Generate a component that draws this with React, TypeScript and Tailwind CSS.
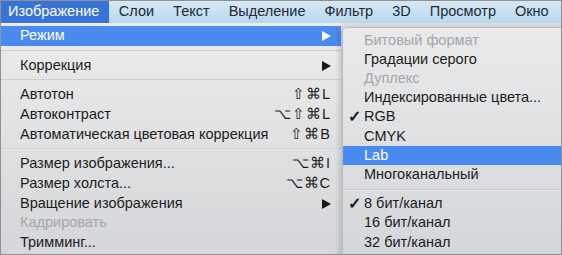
import { ReactNode } from 'react'

// ── data ──────────────────────────────────────────────────────────────────────

const bar = ['Изображение', 'Слои', 'Текст', 'Выделение', 'Фильтр', '3D', 'Просмотр', 'Окно']

type Item =
  | { sep: true }
  | { label: string; shortcut?: string; arrow?: boolean; disabled?: boolean; active?: boolean; check?: boolean }

const main: Item[] = [
  { label: 'Режим', arrow: true, active: true },
  { sep: true },
  { label: 'Коррекция', arrow: true },
  { sep: true },
  { label: 'Автотон', shortcut: '⇧⌘L' },
  { label: 'Автоконтраст', shortcut: '⌥⇧⌘L' },
  { label: 'Автоматическая цветовая коррекция', shortcut: '⇧⌘B' },
  { sep: true },
  { label: 'Размер изображения...', shortcut: '⌥⌘I' },
  { label: 'Размер холста...', shortcut: '⌥⌘C' },
  { label: 'Вращение изображения', arrow: true },
  { label: 'Кадрировать', disabled: true },
  { label: 'Тримминг...' },
]

const sub: Item[] = [
  { label: 'Битовый формат', disabled: true },
  { label: 'Градации серого' },
  { label: 'Дуплекс', disabled: true },
  { label: 'Индексированные цвета...' },
  { label: 'RGB', check: true },
  { label: 'CMYK' },
  { label: 'Lab', active: true },
  { label: 'Многоканальный' },
  { sep: true },
  { label: '8 бит/канал', check: true },
  { label: '16 бит/канал' },
  { label: '32 бит/канал' },
]

// ── pieces ────────────────────────────────────────────────────────────────────

function Arrow({ white }: { white?: boolean }) {
  return (
    <svg width="9" height="10" viewBox="0 0 9 10">
      <path d="M0 0L9 5L0 10Z" fill={white ? '#ffffff' : '#1a1a1a'} />
    </svg>
  )
}

function Separator() {
  return <div className="my-[4px] h-[2px] border-b border-[#e4e5e6] bg-[#cfd0d2]" />
}

function Row({ item, indent, height }: { item: Item; indent: string; height: string }): ReactNode {
  if ('sep' in item) return <Separator />
  const color = item.active ? 'text-white' : item.disabled ? 'text-[#a4a6a9]' : 'text-[#1c1c1c]'
  return (
    <div
      className={`relative flex items-center pr-[10px] ${height} ${indent} ${color} ${
        item.active ? 'bg-[#4a8bf2]' : ''
      }`}
    >
      {item.check && <span className="absolute left-[5px] text-[16px] font-bold leading-none">✓</span>}
      <span className="flex-1 whitespace-nowrap">{item.label}</span>
      {item.shortcut && <span className="tracking-[1px]">{item.shortcut}</span>}
      {item.arrow && <Arrow white={item.active} />}
    </div>
  )
}

// ── App ───────────────────────────────────────────────────────────────────────

export default function App() {
  return (
    <div
      className="relative h-[255px] w-[562px] overflow-hidden border border-[#8f9194] bg-[#dcdde0] text-[14.5px]"
      style={{ fontFamily: '"Liberation Sans", Arial, sans-serif' }}
    >
      {/* menu bar */}
      <div className="flex h-[22px] items-center bg-gradient-to-b from-[#d7e8f4] to-[#b9d7ee] text-[14.5px] text-[#1c2a36]">
        {bar.map((name, i) => (
          <div
            key={name}
            className={`flex h-full items-center ${i === 0 ? 'bg-[#3a73d8] pl-[7px] pr-[10px] text-white' : 'px-[9.5px]'}`}
          >
            {name}
          </div>
        ))}
      </div>

      {/* main menu */}
      <div className="w-[340px] bg-gradient-to-b from-[#ececec] to-[#d4d6d9] pt-[3px] pb-[4px]">
        {main.map((item, i) => (
          <Row key={i} item={item} indent="pl-[19px]" height="h-[19.7px]" />
        ))}
      </div>

      {/* Режим submenu */}
      <div className="absolute left-[341px] top-[26px] h-[240px] w-[230px] rounded-tl-[5px] border border-[#b9bbbe] bg-gradient-to-b from-[#e9eaeb] to-[#d3d6d9] pt-[3px] shadow-[-2px_2px_6px_rgba(0,0,0,0.18)]">
        {sub.map((item, i) => (
          <Row key={i} item={item} indent="pl-[21px]" height="h-[19.2px]" />
        ))}
      </div>
    </div>
  )
}
